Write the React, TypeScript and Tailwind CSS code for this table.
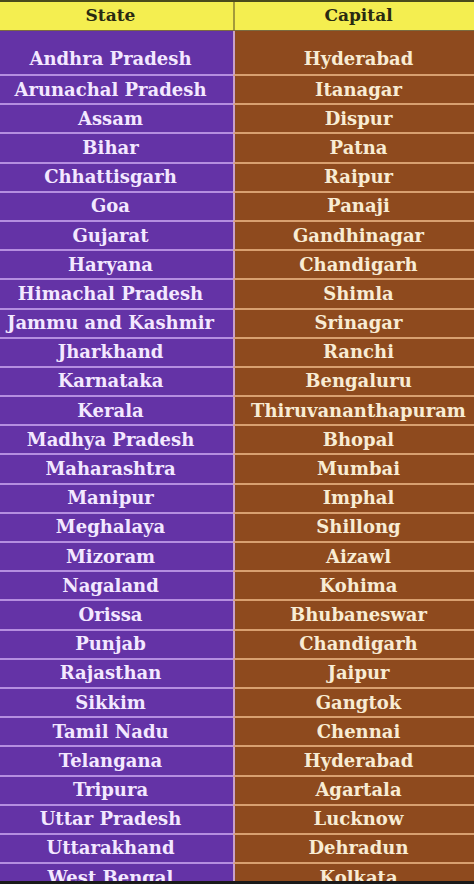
const rows: [string, string][] = [
  ["Andhra Pradesh", "Hyderabad"],
  ["Arunachal Pradesh", "Itanagar"],
  ["Assam", "Dispur"],
  ["Bihar", "Patna"],
  ["Chhattisgarh", "Raipur"],
  ["Goa", "Panaji"],
  ["Gujarat", "Gandhinagar"],
  ["Haryana", "Chandigarh"],
  ["Himachal Pradesh", "Shimla"],
  ["Jammu and Kashmir", "Srinagar"],
  ["Jharkhand", "Ranchi"],
  ["Karnataka", "Bengaluru"],
  ["Kerala", "Thiruvananthapuram"],
  ["Madhya Pradesh", "Bhopal"],
  ["Maharashtra", "Mumbai"],
  ["Manipur", "Imphal"],
  ["Meghalaya", "Shillong"],
  ["Mizoram", "Aizawl"],
  ["Nagaland", "Kohima"],
  ["Orissa", "Bhubaneswar"],
  ["Punjab", "Chandigarh"],
  ["Rajasthan", "Jaipur"],
  ["Sikkim", "Gangtok"],
  ["Tamil Nadu", "Chennai"],
  ["Telangana", "Hyderabad"],
  ["Tripura", "Agartala"],
  ["Uttar Pradesh", "Lucknow"],
  ["Uttarakhand", "Dehradun"],
  ["West Bengal", "Kolkata"],
];

export default function App() {
  return (
    <div
      className="relative h-[884px] w-[474px] overflow-hidden bg-[#6433a6]"
      style={{ fontFamily: '"DejaVu Serif", "Liberation Serif", serif' }}
    >
      <div className="h-[2px] bg-[#4a4a1c]" />
      {/* header */}
      <div className="grid h-[28px] grid-cols-[233px_1fr] bg-[#f4ee50] text-[17px] font-bold text-[#2a2a12]">
        <div className="flex items-center justify-center pr-[12px]">State</div>
        <div className="flex items-center justify-center border-l-2 border-[#a39a3a] pl-[8px]">
          Capital
        </div>
      </div>
      <div className="h-[1px] bg-[#7a6a40]" />

      {rows.map(([state, capital], i) => (
        <div
          key={state}
          className={
            i === 0
              ? "grid h-[45px] grid-cols-[233px_1fr] text-[18px] font-bold leading-none"
              : "grid h-[29.2px] grid-cols-[233px_1fr] text-[18px] font-bold leading-none"
          }
        >
          <div
            className={
              i === 0
                ? "flex items-end justify-center whitespace-nowrap border-b-2 border-[#b58ee0] bg-[#6433a6] pb-[6px] pr-[12px] text-[#f3e8ff]"
                : "flex items-center justify-center whitespace-nowrap border-b-2 border-[#b58ee0] bg-[#6433a6] pr-[12px] text-[#f3e8ff]"
            }
          >
            {state}
          </div>
          <div
            className={
              i === 0
                ? "flex items-end justify-center whitespace-nowrap border-b-2 border-l-2 border-b-[#d9a070] border-l-[#c9a0c8] bg-[#8e4a1e] pb-[6px] pl-[8px] text-[#f8ecd4]"
                : "flex items-center justify-center whitespace-nowrap border-b-2 border-l-2 border-b-[#d9a070] border-l-[#c9a0c8] bg-[#8e4a1e] pl-[8px] text-[#f8ecd4]"
            }
          >
            {capital}
          </div>
        </div>
      ))}
      <div className="absolute bottom-0 left-0 h-[3px] w-full bg-[#1a1a1a]" />
    </div>
  );
}
